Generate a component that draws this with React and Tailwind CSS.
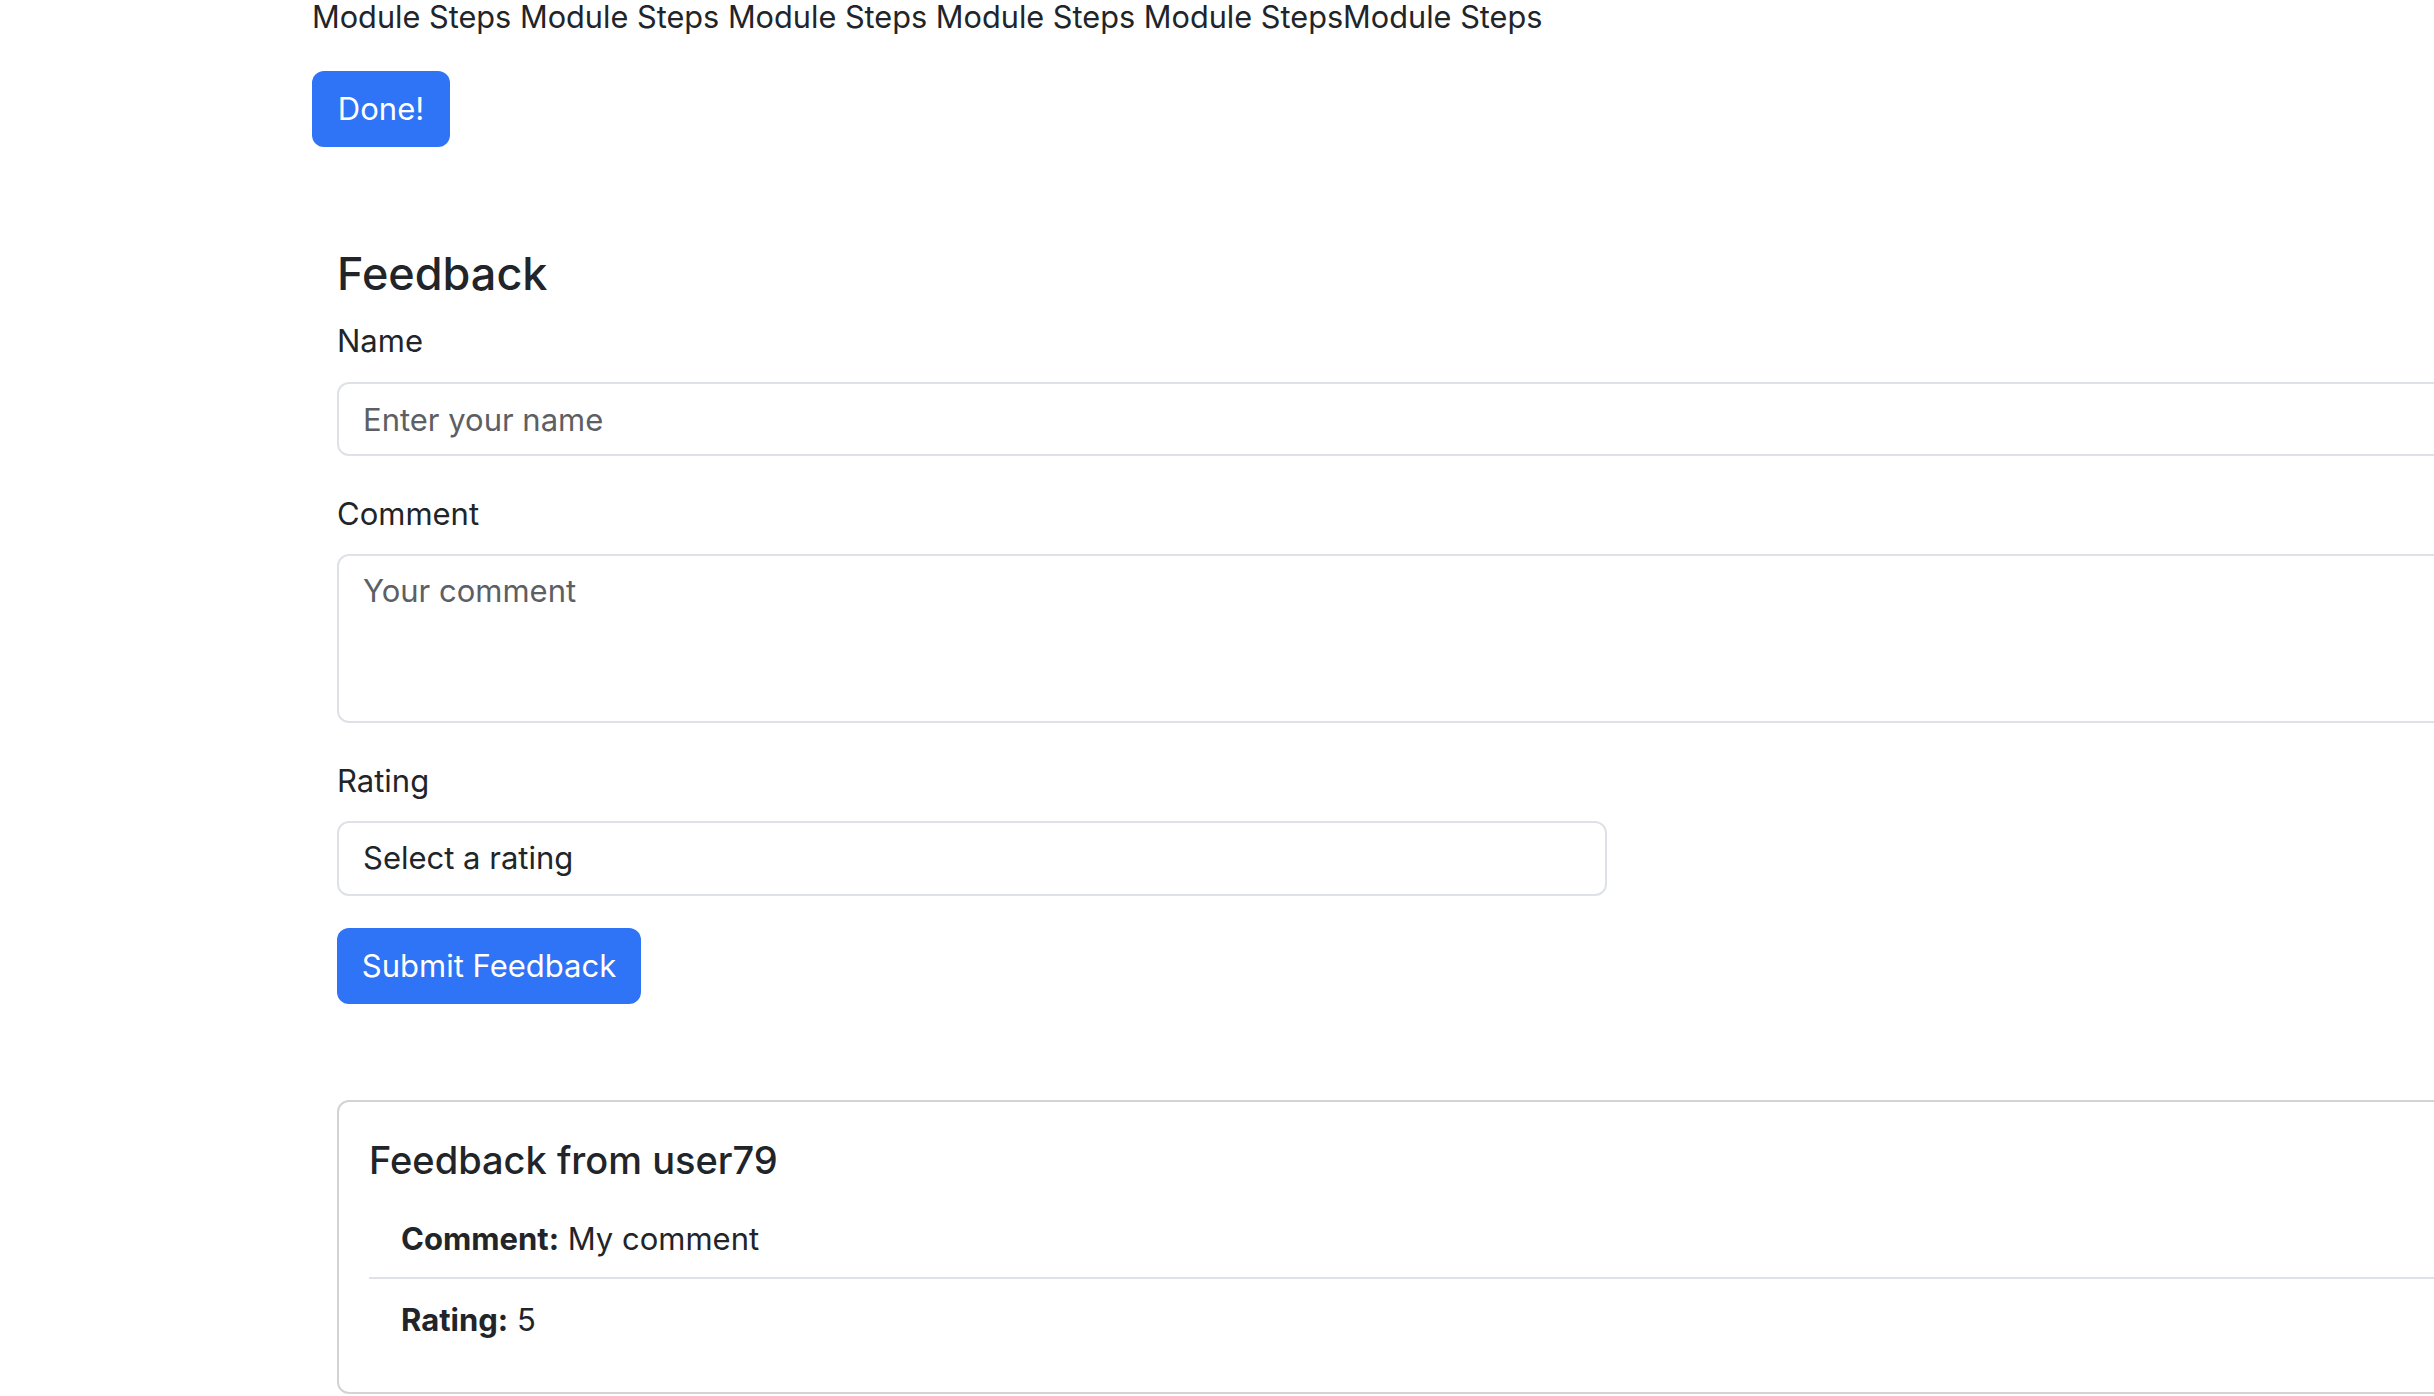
import React from 'react';

const FONT = { fontFamily: 'Inter, "Liberation Sans", sans-serif' };

function Label({ children, className = '' }) {
  return <label className={`block text-[31px] leading-[46px] text-[#212529] ${className}`}>{children}</label>;
}

export default function App() {
  return (
    <div className="w-screen h-screen overflow-hidden bg-white text-[#212529]" style={FONT}>
      <div className="pl-[312px]">
        <p className="mt-[-6px] text-[30.7px] leading-[46px] whitespace-nowrap">
          Module Steps Module Steps Module Steps Module Steps Module StepsModule Steps
        </p>
        <button className="mt-[31px] h-[76px] w-[138px] rounded-[12px] bg-[#2f73f6] text-[31px] text-white">
          Done!
        </button>

        {/* Feedback form */}
        <div className="ml-[25px] w-[2540px]">
          <h4 className="mt-[99px] text-[45px] leading-[55px] font-medium">Feedback</h4>

          <Label className="mt-[17px]">Name</Label>
          <input
            type="text"
            placeholder="Enter your name"
            className="mt-[18px] block h-[74px] w-full rounded-[12px] border-2 border-[#dee2e6] px-[24px] text-[31px] outline-none placeholder:text-[#5c6064]"
          />

          <Label className="mt-[35px]">Comment</Label>
          <textarea
            placeholder="Your comment"
            className="mt-[17px] block h-[169px] w-full resize-none rounded-[12px] border-2 border-[#dee2e6] px-[24px] py-[12px] text-[31px] leading-[46px] outline-none placeholder:text-[#5c6064]"
          />

          <Label className="mt-[35px]">Rating</Label>
          <select
            defaultValue=""
            className="mt-[17px] block h-[75px] w-[1270px] appearance-none rounded-[12px] border-2 border-[#dee2e6] bg-white px-[24px] text-[31px] text-[#212529] outline-none"
          >
            <option value="">Select a rating</option>
            <option value="1">1</option>
            <option value="2">2</option>
            <option value="3">3</option>
            <option value="4">4</option>
            <option value="5">5</option>
          </select>

          <button className="mt-[32px] h-[76px] w-[304px] rounded-[12px] bg-[#2f73f6] text-[31px] text-white">
            Submit Feedback
          </button>

          {/* Submitted feedback card */}
          <div className="mt-[96px] rounded-[12px] border-2 border-[#d3d3d4] px-[30px] pt-[36px] pb-[34px]">
            <h5 className="text-[38px] leading-[44px] font-medium">Feedback from user79</h5>
            <ul className="mt-[19px]">
              <li className="px-[32px] py-[15px] text-[31px] leading-[46px] border-b-2 border-[#dee2e6]">
                <strong className="font-bold">Comment:</strong> My comment
              </li>
              <li className="px-[32px] pt-[18px] pb-[15px] text-[31px] leading-[46px]">
                <strong className="font-bold">Rating:</strong> 5
              </li>
            </ul>
          </div>
        </div>
      </div>
    </div>
  );
}
